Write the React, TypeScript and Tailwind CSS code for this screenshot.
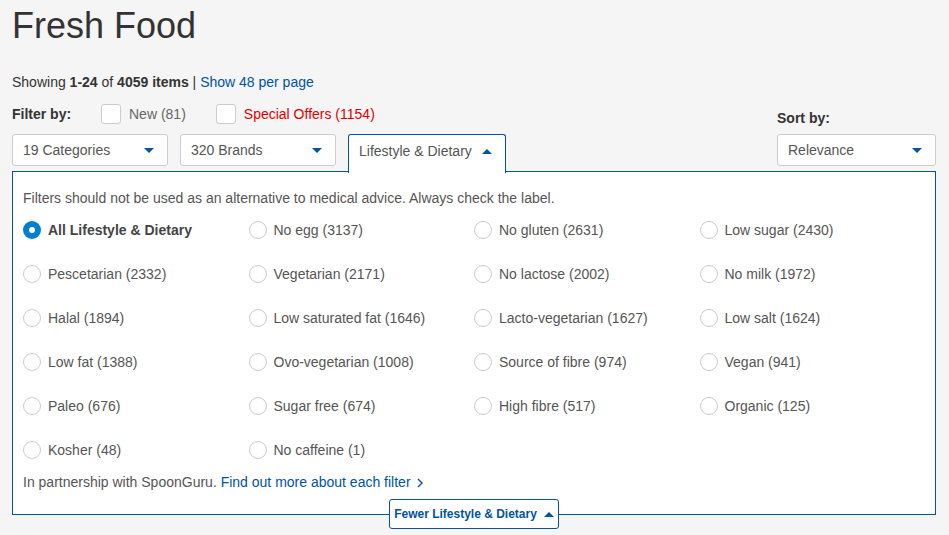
import React from "react";

const blue = "#00539f";

const options: [string, boolean?][] = [
  ["All Lifestyle & Dietary", true],
  ["No egg (3137)"],
  ["No gluten (2631)"],
  ["Low sugar (2430)"],
  ["Pescetarian (2332)"],
  ["Vegetarian (2171)"],
  ["No lactose (2002)"],
  ["No milk (1972)"],
  ["Halal (1894)"],
  ["Low saturated fat (1646)"],
  ["Lacto-vegetarian (1627)"],
  ["Low salt (1624)"],
  ["Low fat (1388)"],
  ["Ovo-vegetarian (1008)"],
  ["Source of fibre (974)"],
  ["Vegan (941)"],
  ["Paleo (676)"],
  ["Sugar free (674)"],
  ["High fibre (517)"],
  ["Organic (125)"],
  ["Kosher (48)"],
  ["No caffeine (1)"],
];

function DownArrow() {
  return <span className="inline-block h-0 w-0 border-x-[5px] border-t-[5px] border-x-transparent border-t-[#00539f]" />;
}

function UpArrow() {
  return <span className="inline-block h-0 w-0 border-x-[5px] border-b-[5px] border-x-transparent border-b-[#00539f]" />;
}

function Select({ label, width }: { label: string; width: string }) {
  return (
    <div className={`flex h-[32px] items-center justify-between rounded-[3px] border border-[#cccccc] bg-white pl-[10px] pr-[13px] text-[14px] text-[#555] ${width}`}>
      <span>{label}</span>
      <DownArrow />
    </div>
  );
}

export default function App() {
  return (
    <div className="min-h-screen bg-[#f5f5f5] px-[12px] pt-[6px] text-[#333] [font-family:'Liberation_Sans',Arial,sans-serif]">
      <h1 className="text-[36px] leading-[40px] text-[#333]">Fresh Food</h1>

      <p className="mt-[26px] text-[14px] leading-[20px]">
        Showing <b>1-24</b> of <b>4059 items</b> | <a href="#" className="text-[#00539f]">Show 48 per page</a>
      </p>

      <div className="mt-[12px] flex items-end justify-between">
        <div>
          {/* Filter checkboxes */}
          <div className="flex h-[20px] items-center text-[14px]">
            <span className="w-[89px] font-bold">Filter by:</span>
            <span className="h-[20px] w-[20px] rounded-[3px] border border-[#cccccc] bg-white" />
            <span className="ml-[8px] text-[#666]">New (81)</span>
            <span className="ml-[30px] h-[20px] w-[20px] rounded-[3px] border border-[#cccccc] bg-white" />
            <span className="ml-[8px] text-[#e00000]">Special Offers (1154)</span>
          </div>

          {/* Dropdowns */}
          <div className="mt-[10px] flex items-start gap-[12px]">
            <Select label="19 Categories" width="w-[156px]" />
            <Select label="320 Brands" width="w-[156px]" />
            <div className="relative z-10 -mb-[7px] h-[39px] w-[158px] rounded-t-[3px] border border-b-0 border-[#00539f] bg-white pl-[10px] pr-[13px] text-[14px] text-[#555]">
              <div className="flex h-[32px] items-center justify-between">
                <span>Lifestyle &amp; Dietary</span>
                <UpArrow />
              </div>
            </div>
          </div>
        </div>

        <div>
          <div className="mb-[6px] text-[14px] font-bold leading-[20px]">Sort by:</div>
          <Select label="Relevance" width="w-[159px] mr-[1px]" />
        </div>
      </div>

      {/* Lifestyle panel */}
      <div className="relative mt-[5px] w-[924px] border border-[#00539f] bg-white px-[10px] pb-[22px] pt-[16px] text-[14px] leading-[20px] text-[#555]">
        <p>Filters should not be used as an alternative to medical advice. Always check the label.</p>

        <div className="grid grid-cols-4">
          {options.map(([label, checked]) => (
            <label key={label} className="flex h-[44px] items-center">
              {checked ? (
                <span className="flex h-[18px] w-[18px] items-center justify-center rounded-full bg-[#007fd0]">
                  <span className="h-[6px] w-[6px] rounded-full bg-white" />
                </span>
              ) : (
                <span className="h-[18px] w-[18px] rounded-full border border-[#cccccc] bg-white" />
              )}
              <span className={`ml-[7px] ${checked ? "font-bold text-[#444]" : ""}`}>{label}</span>
            </label>
          ))}
        </div>

        <p>
          In partnership with SpoonGuru.{" "}
          <a href="#" className="text-[#00539f]">
            Find out more about each filter
            <svg className="ml-[6px] inline-block align-[-1px]" width="6" height="10" viewBox="0 0 6 10" fill="none" stroke={blue} strokeWidth="1.4">
              <path d="M1 1l4 4-4 4" />
            </svg>
          </a>
        </p>

        <button className="absolute bottom-0 left-1/2 flex h-[30px] w-[170px] -translate-x-1/2 translate-y-1/2 items-center justify-center gap-[7px] rounded-[3px] border border-[#00539f] bg-white text-[12px] font-bold text-[#00539f]">
          Fewer Lifestyle &amp; Dietary
          <UpArrow />
        </button>
      </div>
    </div>
  );
}
